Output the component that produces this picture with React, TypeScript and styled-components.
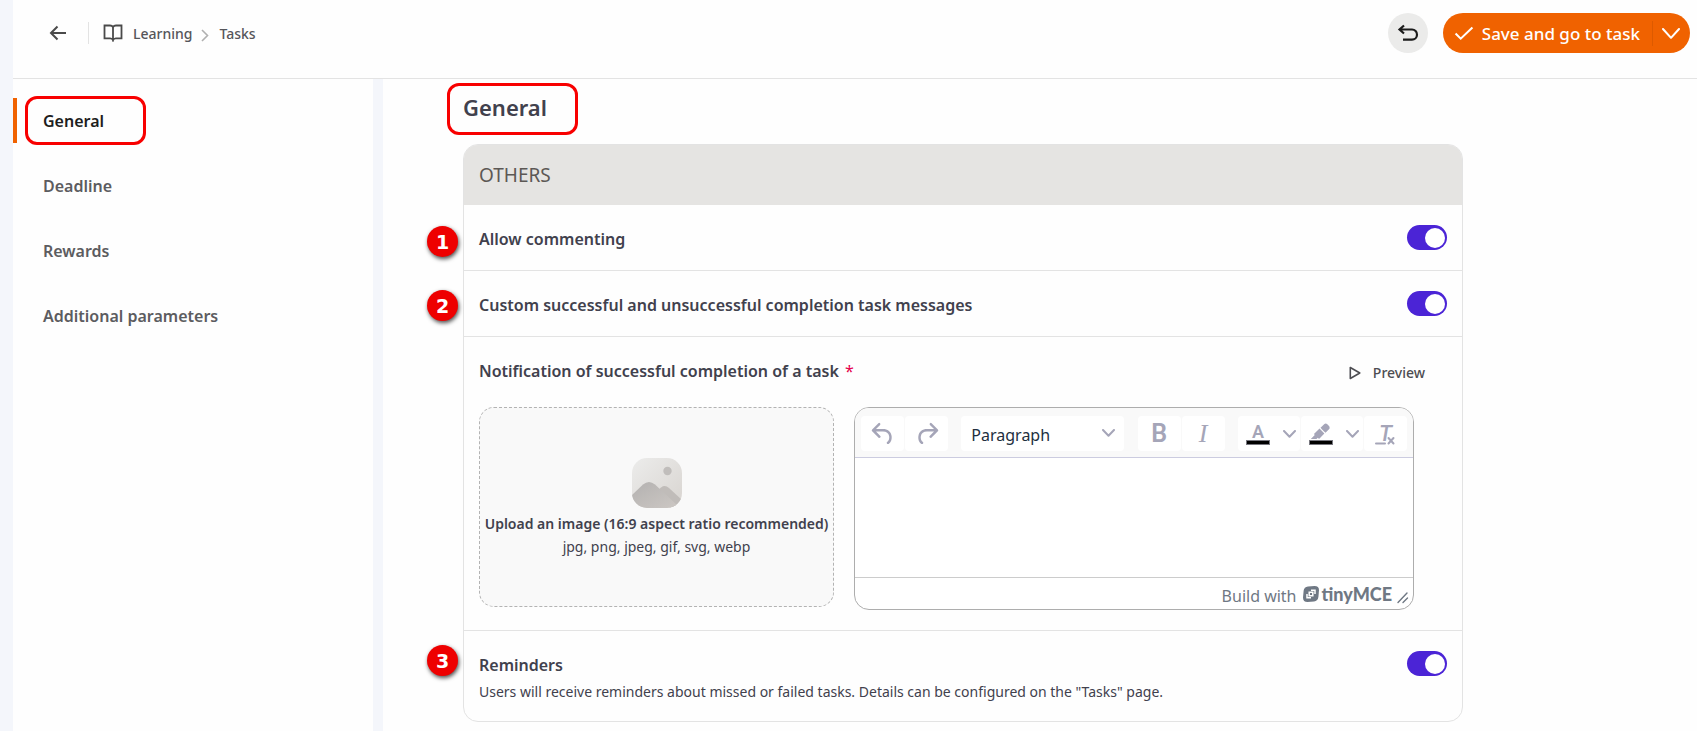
import React from 'react';
import styled, { createGlobalStyle } from 'styled-components';

const sans = `'Noto Sans', 'Open Sans', sans-serif`;

const GlobalStyle = createGlobalStyle`
  *, *::before, *::after { box-sizing: border-box; }
  body { margin: 0; background: #fefefe; font-family: ${sans}; color: #41414d; }
  button, input, select, textarea { font-family: inherit; color: inherit; margin: 0; }
  button { border: 0; padding: 0; background: none; cursor: pointer; }
  a { color: inherit; text-decoration: none; }
  svg { display: block; flex: none; }
`;

const Page = styled.div`
  display: flex;
  flex-direction: column;
  min-height: 100vh;
  border-left: 13px solid #f4f6fb;
`;

const TopBar = styled.header`
  display: flex;
  justify-content: space-between;
  align-items: flex-start;
  height: 79px;
  padding: 13px 7px 0 36px;
  border-bottom: 1px solid #e3e3e3;
`;

const Trail = styled.nav`
  display: flex;
  align-items: center;
  height: 40px;
  font-size: 14px;
  font-weight: 500;
  line-height: 20px;
  color: #55555a;
`;

const BackButton = styled.button`
  display: flex;
  padding-right: 21px;
  color: #4a4a4a;
`;

const BookLink = styled.a`
  display: flex;
  align-items: center;
  gap: 10px;
  height: 22px;
  padding-left: 14px;
  border-left: 1px solid #e3e3e3;
`;

const Separator = styled.span`
  display: flex;
  padding: 5px 10px 0 9px;
  color: #b0b0b0;
`;

const Crumb = styled.span`
  display: block;
  padding-top: 2px;
`;

const Actions = styled.div`
  display: flex;
  gap: 15px;
`;

const RoundButton = styled.button`
  display: flex;
  align-items: center;
  justify-content: center;
  width: 40px;
  height: 40px;
  border-radius: 50%;
  background: #ebebea;
  color: #1b1b1b;
`;

const SplitButton = styled.div`
  display: flex;
  align-items: center;
  height: 40px;
  border-radius: 20px;
  background: #f06200;
  color: #fff;
`;

const SaveButton = styled.button`
  display: flex;
  align-items: center;
  gap: 8px;
  height: 40px;
  padding: 1px 12px 0 11px;
  font-size: 17px;
  font-weight: 500;
  line-height: 24px;
`;

const MoreButton = styled.button`
  display: flex;
  align-items: center;
  height: 25px;
  padding: 0 10px 0 9px;
  border-left: 1px solid #dd5a00;
`;

const Body = styled.div`
  display: flex;
  flex: 1;
`;

const SideNav = styled.nav`
  flex: 0 0 370px;
  display: flex;
  flex-direction: column;
  gap: 20px;
  padding-top: 19px;
  border-right: 10px solid #f4f6fb;
`;

const SideLink = styled.a<{ $active?: boolean }>`
  position: relative;
  display: flex;
  align-items: center;
  height: 45px;
  padding: 1px 0 0 26px;
  border-left: 4px solid ${p => (p.$active ? '#f06200' : 'transparent')};
  border-radius: 0 3px 3px 0;
  font-size: 16px;
  font-weight: 600;
  line-height: 24px;
  color: ${p => (p.$active ? '#1d1d1d' : '#5c5c60')};
`;

const Frame = styled.span<{ $left: number; $top: number; $width: number; $height: number }>`
  position: absolute;
  left: ${p => p.$left}px;
  top: ${p => p.$top}px;
  width: ${p => p.$width}px;
  height: ${p => p.$height}px;
  border: 3px solid #f80000;
  border-radius: 12px;
  pointer-events: none;
`;

const Main = styled.main`
  flex: 1;
  min-width: 0;
  padding: 13px 80px 9px;
`;

const Title = styled.h1`
  position: relative;
  margin: 0 0 22px;
  font-size: 22px;
  font-weight: 600;
  line-height: 30px;
`;

const Card = styled.section`
  max-width: 1000px;
  border: 1px solid #e3e3e3;
  border-radius: 15px;
`;

const CardHead = styled.h2`
  margin: 0;
  padding: 18px 15px;
  border-radius: 14px 14px 0 0;
  background: #e5e4e2;
  font-size: 19px;
  font-weight: 400;
  line-height: 24px;
  color: #5c5855;
`;

const Row = styled.div`
  position: relative;
  padding: 20px 15px;
  & + & { border-top: 1px solid #e3e3e3; }
`;

const Line = styled.div`
  display: flex;
  align-items: flex-start;
  justify-content: space-between;
  height: 29px;
  margin-bottom: -4px;
`;

const Label = styled.label`
  padding-top: 2px;
  font-size: 16px;
  font-weight: 600;
  line-height: 24px;
`;

const Required = styled.span`
  margin-left: 2px;
  font-weight: 400;
  color: #e5004d;
`;

const Toggle = styled.input`
  appearance: none;
  display: flex;
  align-items: center;
  justify-content: flex-end;
  flex: none;
  width: 40px;
  height: 25px;
  padding-right: 2px;
  border-radius: 13px;
  background: #4b24d6;
  cursor: pointer;
  &::before {
    content: '';
    width: 20px;
    height: 20px;
    border-radius: 50%;
    background: #fff;
  }
  &:not(:checked) {
    justify-content: flex-start;
    padding-left: 2px;
    background: #b5b5b5;
  }
`;

const Note = styled.p`
  margin: 0;
  padding-top: 6px;
  font-size: 14px;
  line-height: 19px;
`;

const Marker = styled.span<{ $top: number }>`
  position: absolute;
  left: -37px;
  top: ${p => p.$top}px;
  display: flex;
  align-items: center;
  justify-content: center;
  width: 31px;
  height: 31px;
  border-radius: 50%;
  background: #ee0000;
  box-shadow: 1px 2px 4px rgba(0, 0, 0, 0.7);
  font: 700 19px/24px 'DejaVu Sans', sans-serif;
  color: #fff;
`;

const PreviewButton = styled.button`
  display: flex;
  align-items: center;
  gap: 12px;
  margin-right: 22px;
  padding-top: 4px;
  font-size: 14px;
  font-weight: 500;
  line-height: 24px;
  color: #4d4d52;
`;

const Message = styled.div`
  display: grid;
  grid-template-columns: 355fr 560fr;
  align-items: start;
  gap: 20px;
  padding: 25px 33px 0 0;
`;

const DropZone = styled.button`
  display: flex;
  flex-direction: column;
  align-items: center;
  justify-content: center;
  min-height: 200px;
  padding-top: 2px;
  border: 1px dashed #b3b3b3;
  border-radius: 15px;
  background: #f9f9f9;
  font-size: 14px;
  line-height: 23px;
`;

const DropTitle = styled.span`
  margin-top: 4px;
  font-weight: 600;
  white-space: nowrap;
`;

const Editor = styled.div`
  display: flex;
  flex-direction: column;
  height: 203px;
  border: 1px solid #adadad;
  border-radius: 15px;
  background: #fff;
  overflow: hidden;
`;

const Toolbar = styled.div`
  display: flex;
  justify-content: space-between;
  padding: 8px 6px 6px;
  border-bottom: 1px solid #cccce0;
  background: #f9f9f9;
  color: #a5a5b8;
`;

const Group = styled.div`
  display: flex;
  gap: 1px;
`;

const Tool = styled.button<{ $split?: boolean }>`
  display: flex;
  align-items: center;
  justify-content: ${p => (p.$split ? 'space-between' : 'center')};
  width: ${p => (p.$split ? 62 : 43)}px;
  height: 35px;
  padding: ${p => (p.$split ? '0 4px 0 8px' : '0')};
  border-radius: 4px;
  background: #fff;
`;

const Glyph = styled.span<{ $face: string; $size: number; $weight: number; $slant?: boolean }>`
  font-family: ${p => p.$face};
  font-size: ${p => p.$size}px;
  font-weight: ${p => p.$weight};
  font-style: ${p => (p.$slant ? 'italic' : 'normal')};
  line-height: 24px;
  color: #a5a5b8;
`;

const Inked = styled.span`
  display: flex;
  flex-direction: column;
  align-items: center;
  justify-content: flex-end;
  width: 24px;
  height: 22px;
  &::after {
    content: '';
    flex: none;
    width: 24px;
    height: 5px;
    border: 1px solid #77777f;
    background: #000;
  }
`;

const InkLetter = styled.span`
  font: 600 18px/16px Roboto, sans-serif;
  color: #a5a5b8;
`;

const ClearIcon = styled.span`
  position: relative;
  display: flex;
  justify-content: center;
  width: 24px;
  height: 24px;
  svg { position: absolute; left: 0; bottom: 1px; }
`;

const BlockPicker = styled.div`
  position: relative;
  display: flex;
  width: 163px;
  height: 35px;
  svg { position: absolute; right: 9px; top: 13px; pointer-events: none; }
`;

const Select = styled.select`
  appearance: none;
  flex: 1;
  height: 35px;
  padding: 2px 10px 0;
  border: 0;
  border-radius: 4px;
  background: #fff;
  font-size: 16px;
  color: #222f3e;
`;

const Area = styled.textarea`
  flex: 1;
  min-height: 0;
  padding: 12px;
  border: 0;
  outline: 0;
  resize: none;
  font-size: 16px;
`;

const StatusBar = styled.div`
  display: flex;
  align-items: center;
  justify-content: flex-end;
  height: 32px;
  padding: 0 4px 0 12px;
  border-top: 1px solid #cccccc;
  font-size: 16px;
  line-height: 24px;
  color: #6f7884;
`;

const StatusText = styled.span`
  padding-top: 4px;
`;

const Brand = styled.a`
  display: flex;
  align-items: center;
  gap: 3px;
  margin: 0 5px 0 6px;
  font: 900 18px/24px Lato, sans-serif;
`;

const Grip = styled.span`
  padding-top: 8px;
`;

const Chevron = ({ w = 13, h = 8, stroke = 2 }: { w?: number; h?: number; stroke?: number }) => (
  <svg width={w} height={h} viewBox={`0 0 ${w} ${h}`} fill="none" stroke="currentColor" strokeWidth={stroke} strokeLinecap="round" strokeLinejoin="round">
    <path d={`M1 1 L${w / 2} ${h - 1.2} L${w - 1} 1`} />
  </svg>
);

const BackIcon = () => (
  <svg width="18" height="16" viewBox="0 0 18 16" fill="none" stroke="currentColor" strokeWidth="2">
    <path d="M17 8H2.5M8.5 1.5 2 8l6.5 6.5" />
  </svg>
);

const BookIcon = () => (
  <svg width="20" height="18" viewBox="0 0 20 18" fill="none" stroke="#4a4a4a" strokeWidth="1.8">
    <path d="M10 3.2C9.4 2 8.4 1.5 7 1.5H1.5v12.8H7.2c1.4 0 2.4.6 2.8 1.9.4-1.3 1.4-1.9 2.8-1.9h5.7V1.5H13c-1.4 0-2.4.5-3 1.7Zm0 0v13" />
  </svg>
);

const UndoArrow = () => (
  <svg width="22" height="20" viewBox="0 0 22 20" fill="none" stroke="currentColor" strokeWidth="2.2">
    <path d="M7 2.5 2.500 6.500l4.500 4M3 6.500h12a5 5 0 0 1 5 5.200 5 5 0 0 1-5 4.900H6" />
  </svg>
);

const CheckIcon = () => (
  <svg width="20" height="15" viewBox="0 0 21 16" fill="none" stroke="currentColor" strokeWidth="2.2">
    <path d="m1.5 8 5.500 5.500L19.500 1.500" />
  </svg>
);

const HistoryIcon = ({ flip }: { flip?: boolean }) => (
  <svg width="30" height="30" viewBox="0 0 24 24" fill="currentColor">
    <path
      transform={flip ? 'matrix(-1 0 0 1 24 0)' : undefined}
      d="M6.4 8H12c3.700 0 6.200 2 6.800 5.100.6 2.700-.4 5.600-2.300 6.800a1 1 0 0 1-1-1.800c1.100-.6 1.800-2.700 1.400-4.600-.5-2.100-2.100-3.500-4.900-3.500H6.400l3.300 3.300a1 1 0 1 1-1.400 1.400l-5-5a1 1 0 0 1 0-1.400l5-5a1 1 0 0 1 1.400 1.400L6.400 8Z"
    />
  </svg>
);

const PenIcon = () => (
  <svg width="21" height="17" viewBox="2.5 3.5 17 14" fill="#a5a5b8">
    <path d="M7.7 16.7H3l3.300-3.300-.7-.8L10.200 8l4 4.100-4 4.200c-.2.2-.6.2-.8 0l-.6-.7-1.100 1.100zm5-7.500L11 7.400l3-2.900a2 2 0 0 1 2.600 0L18 6c.7.7.7 2 0 2.700l-2.900 2.900-1.800-1.800-.5-.6" />
  </svg>
);

const PlayIcon = () => (
  <svg width="12" height="14" viewBox="0 0 12 14" fill="none" stroke="currentColor" strokeWidth="1.6" strokeLinejoin="round">
    <path d="M1.3 1.500v11L10.800 7z" />
  </svg>
);

const PictureIcon = () => (
  <svg width="50" height="50" viewBox="0 0 50 50">
    <defs>
      <linearGradient id="tile" x1="0" y1="0" x2="1" y2="1">
        <stop offset="0" stopColor="#ececeb" />
        <stop offset="1" stopColor="#d8d4d0" />
      </linearGradient>
      <linearGradient id="hill" x1="0" y1="0" x2="1" y2="1">
        <stop offset="0" stopColor="#b3b1b0" />
        <stop offset="1" stopColor="#cdc8c4" />
      </linearGradient>
      <clipPath id="tileEdge"><rect width="50" height="50" rx="15" /></clipPath>
    </defs>
    <g clipPath="url(#tileEdge)">
      <rect width="50" height="50" fill="url(#tile)" />
      <circle cx="35.5" cy="13" r="4.2" fill="#c0bdbb" />
      <path d="M24 34 29 29.500q4-3 8 .5L50 42v8H38z" fill="#c0bcb9" />
      <path d="M-1 38 11 26.500q6-5 12 0L46 48v3H-1z" fill="url(#hill)" />
    </g>
  </svg>
);

const BrandMark = () => (
  <svg width="16" height="16" viewBox="0 0 16 16">
    <path fill="#6f7884" d="M5 .6 11.500 0Q16 0 16 4.200L15.400 11Q15 15 11 15.400L4.500 16Q0 16 0 11.800L.6 5Q1 1 5 .6Z" />
    <path fill="none" stroke="#fff" strokeWidth="1.5" d="M8 4.200h4V8M8 11.800H4V8M6.200 6.200h3.600v3.600H6.200Z" />
  </svg>
);

const GripIcon = () => (
  <svg width="12" height="12" viewBox="0 0 12 12" stroke="#6f7884" strokeWidth="1.4" strokeLinecap="round">
    <path d="M1 10.500 10 1M6 10.500 10.500 6" />
  </svg>
);

const sections = ['General', 'Deadline', 'Rewards', 'Additional parameters'];

export default function App() {
  return (
    <>
      <GlobalStyle />
      <Page>
        <TopBar>
          <Trail aria-label="Breadcrumb">
            <BackButton aria-label="Back"><BackIcon /></BackButton>
            <BookLink href="#learning"><BookIcon /><Crumb>Learning</Crumb></BookLink>
            <Separator>
              <svg width="8" height="13" viewBox="0 0 8 13" fill="none" stroke="currentColor" strokeWidth="1.6">
                <path d="m1 1 5.500 5.500L1 12" />
              </svg>
            </Separator>
            <a href="#tasks"><Crumb>Tasks</Crumb></a>
          </Trail>
          <Actions>
            <RoundButton aria-label="Undo"><UndoArrow /></RoundButton>
            <SplitButton>
              <SaveButton><CheckIcon />Save and go to task</SaveButton>
              <MoreButton aria-label="More save options"><Chevron w={18} h={11} stroke={2} /></MoreButton>
            </SplitButton>
          </Actions>
        </TopBar>
        <Body>
          <SideNav aria-label="Sections">
            {sections.map((name, i) => (
              <SideLink key={name} href={`#${name}`} $active={i === 0}>
                {name}
                {i === 0 && <Frame $left={8} $top={-2} $width={121} $height={49} />}
              </SideLink>
            ))}
          </SideNav>
          <Main>
            <Title>
              General
              <Frame $left={-16} $top={-9} $width={131} $height={52} />
            </Title>
            <Card>
              <CardHead>OTHERS</CardHead>
              <Row>
                <Marker $top={21}>1</Marker>
                <Line>
                  <Label htmlFor="comments">Allow commenting</Label>
                  <Toggle type="checkbox" id="comments" defaultChecked />
                </Line>
              </Row>
              <Row>
                <Marker $top={19}>2</Marker>
                <Line>
                  <Label htmlFor="custom">Custom successful and unsuccessful completion task messages</Label>
                  <Toggle type="checkbox" id="custom" defaultChecked />
                </Line>
              </Row>
              <Row>
                <Line>
                  <Label htmlFor="message">Notification of successful completion of a task <Required>*</Required></Label>
                  <PreviewButton><PlayIcon />Preview</PreviewButton>
                </Line>
                <Message>
                  <DropZone>
                    <PictureIcon />
                    <DropTitle>Upload an image (16:9 aspect ratio recommended)</DropTitle>
                    <span>jpg, png, jpeg, gif, svg, webp</span>
                  </DropZone>
                  <Editor>
                    <Toolbar>
                      <Group>
                        <Tool aria-label="Undo edit"><HistoryIcon /></Tool>
                        <Tool aria-label="Redo edit"><HistoryIcon flip /></Tool>
                      </Group>
                      <BlockPicker>
                        <Select aria-label="Block format"><option>Paragraph</option></Select>
                        <Chevron />
                      </BlockPicker>
                      <Group>
                        <Tool aria-label="Bold"><Glyph $face="Roboto, sans-serif" $size={25} $weight={600}>B</Glyph></Tool>
                        <Tool aria-label="Italic"><Glyph $face="'Liberation Serif', serif" $size={26} $weight={400} $slant>I</Glyph></Tool>
                      </Group>
                      <Group>
                        <Tool $split aria-label="Text color"><Inked><InkLetter>A</InkLetter></Inked><Chevron /></Tool>
                        <Tool $split aria-label="Highlight color"><Inked><PenIcon /></Inked><Chevron /></Tool>
                        <Tool aria-label="Clear formatting">
                          <ClearIcon>
                            <Glyph $face="Roboto, sans-serif" $size={22} $weight={500} $slant>T</Glyph>
                            <svg width="24" height="12" viewBox="0 0 24 12" fill="none" stroke="#a5a5b8" strokeWidth="2" strokeLinecap="round">
                              <path d="M3 10.500h9M15.500 5l5 5.500M20.500 5l-5 5.500" />
                            </svg>
                          </ClearIcon>
                        </Tool>
                      </Group>
                    </Toolbar>
                    <Area id="message" />
                    <StatusBar>
                      <StatusText>Build with</StatusText>
                      <Brand href="#tinymce"><BrandMark />tinyMCE</Brand>
                      <Grip><GripIcon /></Grip>
                    </StatusBar>
                  </Editor>
                </Message>
              </Row>
              <Row>
                <Marker $top={14}>3</Marker>
                <Line>
                  <Label htmlFor="reminders">Reminders</Label>
                  <Toggle type="checkbox" id="reminders" defaultChecked />
                </Line>
                <Note>Users will receive reminders about missed or failed tasks. Details can be configured on the "Tasks" page.</Note>
              </Row>
            </Card>
          </Main>
        </Body>
      </Page>
    </>
  );
}
